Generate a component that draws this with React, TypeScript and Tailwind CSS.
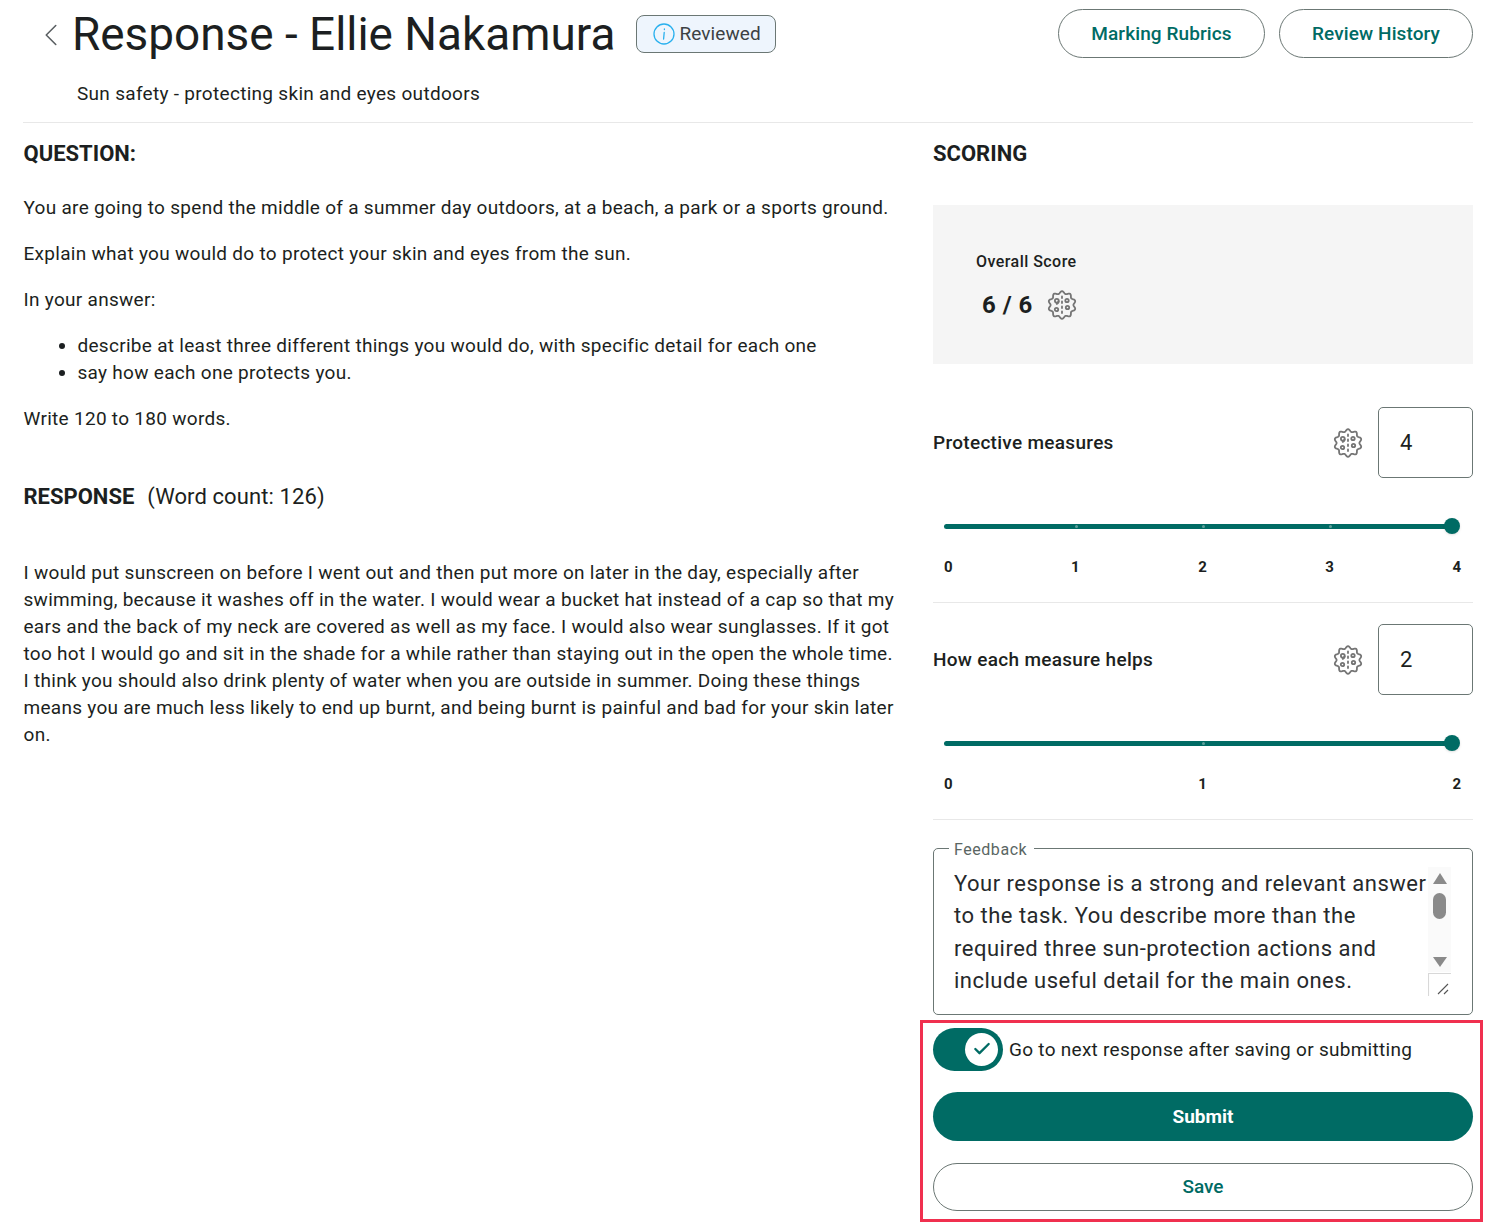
import React from 'react';
import { ChevronLeft, Check } from 'lucide-react';

const teal = '#006b64';

// scalloped outline, ten lobes round the centre
const cookieOutline =
  Array.from({ length: 120 }, (_, i) => {
    const a = (i / 120) * Math.PI * 2;
    const r = 12.6 + 1.2 * Math.cos(a * 10);
    return `${i === 0 ? 'M' : 'L'}${(15 + r * Math.sin(a)).toFixed(2)} ${(15 - r * Math.cos(a)).toFixed(2)}`;
  }).join(' ') + 'Z';

function CookieIcon({ className }: { className?: string }) {
  return (
    <svg viewBox="0 0 30 30" className={className} fill="none" stroke="#757575" strokeWidth="1.8">
      <path d={cookieOutline} />
      <circle cx="9.8" cy="10.8" r="1.9" />
      <path d="M11.7 10.8c0 2-1 3-2.6 3.2" />
      <circle cx="20" cy="10.5" r="1.7" />
      <circle cx="9.5" cy="19.5" r="1.7" />
      <circle cx="20.5" cy="17.5" r="1.7" />
      <path d="M15 6.5v1.6M15 11.5v1.6M15 16.5v1.6M15 21.5v1.6" strokeLinecap="round" />
    </svg>
  );
}

function Criterion({ title, value, marks }: { title: string; value: number; marks: number[] }) {
  return (
    <div className="flex flex-col border-b border-[#e8e8e8] pb-[26px] mb-[21px]">
      <div className="flex items-center">
        <span className="pt-[2px] text-[19px] font-medium text-[#1c1f21] tracking-[0.3px]">{title}</span>
        <CookieIcon className="ml-auto mr-[15px] w-[30px] h-[30px]" />
        <div className="w-[95px] h-[71px] border border-[#6b7774] rounded-[5px] flex items-center pl-[21px] text-[22px] text-[#1c1f21]">
          {value}
        </div>
      </div>
      <div className="relative mt-[44px] ml-[11px] mr-[21px] h-[8px] flex items-center">
        <div className="h-[5px] w-full rounded-full bg-[#006b64]" />
        <div className="absolute right-[-8px] w-4 h-4 rounded-full bg-[#006b64] shadow-sm" />
        {marks.slice(1, -1).map((m) => (
          <div
            key={m}
            className="absolute w-[3px] h-[3px] rounded-full bg-[#5f9f9a]"
            style={{ left: `${4 + (m / (marks.length - 1)) * 508}px` }}
          />
        ))}
      </div>
      <div className="flex justify-between mt-[28px] pl-[11px] pr-[12px] text-[15px] font-bold text-[#1c1f21] leading-[18px]">
        {marks.map((m) => (
          <span key={m}>{m}</span>
        ))}
      </div>
    </div>
  );
}

export default function App() {
  return (
    <div className="w-[1494px] h-[1226px] overflow-hidden bg-white pl-[23px] pr-[21px] text-[#1c1f21] relative" style={{ fontFamily: 'Roboto, sans-serif' }}>
      {/* header */}
      <div className="border-b border-[#e8e8e8] h-[123px]">
        <div className="flex items-center pt-[9px] h-[58px]">
          <ChevronLeft size={38} strokeWidth={1} color="#5a5f62" className="ml-[9px] mt-[2px]" />
          <h1 className="ml-[2px] text-[45.9px] leading-[50px] font-normal">Response - Ellie Nakamura</h1>
          <div className="ml-[21px] flex items-center h-[38px] w-[140px] border border-[#6b7774] rounded-[8px] bg-[#eef5fd] pl-[15px] text-[19px] tracking-[0.1px]">
            <svg viewBox="0 0 24 24" className="w-[24px] h-[24px] mr-[3px] mt-[1px]" fill="none" stroke="#29b0ee" strokeWidth="1.3">
              <circle cx="12" cy="12" r="10" />
              <path d="M12.2 10.5l-.6 6.5M12.4 7v.5" strokeLinecap="round" />
            </svg>
            <span className="text-[#3c4144] pt-[1px]">Reviewed</span>
          </div>
          <button className="ml-auto w-[207px] h-[49px] pt-[1px] rounded-full border border-[#6b7774] text-[19px] tracking-[0.1px] font-medium text-[#006b64]">
            Marking Rubrics
          </button>
          <button className="ml-[14px] w-[194px] h-[49px] pt-[1px] rounded-full border border-[#6b7774] text-[19px] tracking-[0.1px] font-medium text-[#006b64]">
            Review History
          </button>
        </div>
        <p className="ml-[54px] mt-[24px] text-[19px] leading-[24px] tracking-[0.3px]">Sun safety - protecting skin and eyes outdoors</p>
      </div>

      <div className="grid grid-cols-[875px_540px] gap-x-[35px]">
        {/* left column */}
        <div className="pl-[0.5px] text-[19px] leading-[27px] tracking-[0.29px]">
          <h2 className="mt-[17px] text-[22px] leading-[27px] font-bold tracking-normal">QUESTION:</h2>
          <p className="mt-[27px]">You are going to spend the middle of a summer day outdoors, at a beach, a park or a sports ground.</p>
          <p className="mt-[19px]">Explain what you would do to protect your skin and eyes from the sun.</p>
          <p className="mt-[19px]">In your answer:</p>
          <ul className="mt-[19px] ml-[54px] list-disc">
            <li>describe at least three different things you would do, with specific detail for each one</li>
            <li>say how each one protects you.</li>
          </ul>
          <p className="mt-[19px]">Write 120 to 180 words.</p>
          <h2 className="mt-[49px] text-[22px] leading-[32px] font-normal tracking-normal">
            <span className="font-bold">RESPONSE</span>
            <span className="ml-[13px] tracking-[0.1px]">(Word count: 126)</span>
          </h2>
          <p className="mt-[46px]">
            I would put sunscreen on before I went out and then put more on later in the day, especially after swimming, because it washes off in the water. I would wear a bucket hat instead of a cap so that my ears and the back of my neck are covered as well as my face. I would also wear sunglasses. If it got too hot I would go and sit in the shade for a while rather than staying out in the open the whole time. I think you should also drink plenty of water when you are outside in summer. Doing these things means you are much less likely to end up burnt, and being burnt is painful and bad for your skin later on.
          </p>
        </div>

        {/* scoring column */}
        <div className="flex flex-col">
          <h2 className="mt-[17px] text-[22px] leading-[27px] font-bold">SCORING</h2>
          <div className="mt-[38px] h-[159px] bg-[#f5f5f5] pl-[43px] pt-[47px]">
            <div className="text-[16px] leading-[20px] font-medium tracking-[0.45px]">Overall Score</div>
            <div className="flex items-center mt-[15px] ml-[6px]">
              <span className="text-[24px] font-bold tracking-[0.5px] text-[#1c1f21]">6 / 6</span>
              <CookieIcon className="ml-[14px] w-[30px] h-[30px]" />
            </div>
          </div>
          <div className="mt-[43px]">
            <Criterion title="Protective measures" value={4} marks={[0, 1, 2, 3, 4]} />
            <Criterion title="How each measure helps" value={2} marks={[0, 1, 2]} />
          </div>
          <fieldset className="-mt-[4px] h-[178px] border border-[#6b7774] rounded-[5px] pl-[20px] pr-[14px] relative">
            <legend className="ml-[-5px] pl-[5px] pr-[7px] pt-[4px] text-[16px] leading-[18px] text-[#5a6663] tracking-[0.55px]">Feedback</legend>
            <div className="mt-[9px] text-[22px] leading-[32.4px] tracking-[0.5px] w-[480px] text-[#26292b]">
              Your response is a strong and relevant answer to the task. You describe more than the required three sun-protection actions and include useful detail for the main ones.
            </div>
            <div className="absolute right-[21px] top-[8px] h-[105px] w-[23px] bg-[#fafafa] flex flex-col items-center">
              <div className="mt-[6px] w-0 h-0 border-x-[7px] border-x-transparent border-b-[11px] border-b-[#8a8a8a]" />
              <div className="mt-[9px] w-[13px] h-[26px] rounded-full bg-[#8a8a8a]" />
              <div className="mt-auto mb-[5px] w-0 h-0 border-x-[7px] border-x-transparent border-t-[10px] border-t-[#8a8a8a]" />
            </div>
            <svg viewBox="0 0 23 23" className="absolute right-[21px] top-[114px] w-[23px] h-[23px]" fill="none" stroke="#555" strokeWidth="1.1">
              <path d="M0.5 23V0.5H23" stroke="#d8d8d8" />
              <path d="M10 21L20 11M16 21L20 17" />
            </svg>
          </fieldset>
          <div className="flex items-center mt-[12px] h-[44px]">
            <div className="w-[70px] h-[43px] rounded-full bg-[#006b64] flex items-center justify-end pr-[5px]">
              <div className="w-[33px] h-[33px] rounded-full bg-white flex items-center justify-center">
                <Check size={20} color={teal} strokeWidth={2.8} />
              </div>
            </div>
            <span className="ml-[6px] pt-[2px] text-[19px] tracking-[0.28px]">Go to next response after saving or submitting</span>
          </div>
          <button className="mt-[21px] h-[49px] pt-[2px] rounded-full bg-[#006b64] text-white text-[19px] font-bold">Submit</button>
          <button className="mt-[22px] h-[48px] rounded-full border border-[#6b7774] text-[#006b64] text-[19px] font-medium">Save</button>
        </div>
      </div>

      {/* annotation box */}
      <div className="absolute left-[920px] top-[1020px] w-[563px] h-[202px] border-[3px] border-[#f0304f]" />
    </div>
  );
}
